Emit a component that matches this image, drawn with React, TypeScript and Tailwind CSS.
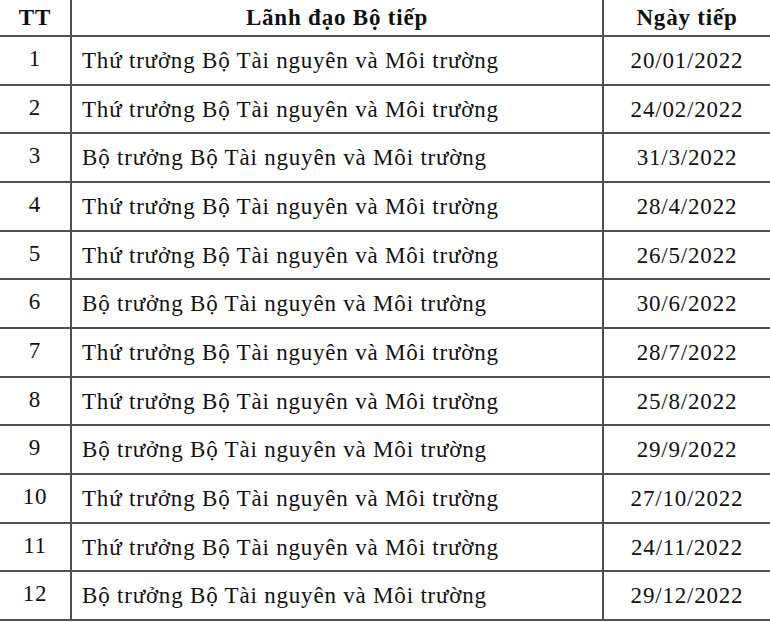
const rows = [
  ['1', 'Thứ trưởng Bộ Tài nguyên và Môi trường', '20/01/2022'],
  ['2', 'Thứ trưởng Bộ Tài nguyên và Môi trường', '24/02/2022'],
  ['3', 'Bộ trưởng Bộ Tài nguyên và Môi trường', '31/3/2022'],
  ['4', 'Thứ trưởng Bộ Tài nguyên và Môi trường', '28/4/2022'],
  ['5', 'Thứ trưởng Bộ Tài nguyên và Môi trường', '26/5/2022'],
  ['6', 'Bộ trưởng Bộ Tài nguyên và Môi trường', '30/6/2022'],
  ['7', 'Thứ trưởng Bộ Tài nguyên và Môi trường', '28/7/2022'],
  ['8', 'Thứ trưởng Bộ Tài nguyên và Môi trường', '25/8/2022'],
  ['9', 'Bộ trưởng Bộ Tài nguyên và Môi trường', '29/9/2022'],
  ['10', 'Thứ trưởng Bộ Tài nguyên và Môi trường', '27/10/2022'],
  ['11', 'Thứ trưởng Bộ Tài nguyên và Môi trường', '24/11/2022'],
  ['12', 'Bộ trưởng Bộ Tài nguyên và Môi trường', '29/12/2022'],
];

export default function App() {
  return (
    <div className="w-[770px] h-[622px] bg-white text-[#111] font-['Liberation_Serif','Times_New_Roman',serif] text-[23px] tracking-[0.8px] leading-none">
      <div className="flex flex-col h-[621px]">
        <div className="flex h-[37px] border-b-2 border-[#505050] font-bold">
          <div className="w-[72px] border-r-2 border-[#505050] flex items-center justify-center">TT</div>
          <div className="w-[532px] border-r-2 border-[#505050] flex items-center justify-center">Lãnh đạo Bộ tiếp</div>
          <div className="flex-1 flex items-center justify-center">Ngày tiếp</div>
        </div>
        {rows.map(([n, who, date]) => (
          <div key={n} className="flex flex-1 border-b-2 border-[#505050]">
            <div className="w-[72px] border-r-2 border-[#505050] flex justify-center pt-[10px]">{n}</div>
            <div className="w-[532px] border-r-2 border-[#505050] flex items-center pl-[10px]">{who}</div>
            <div className="flex-1 flex items-center justify-center">{date}</div>
          </div>
        ))}
      </div>
    </div>
  );
}
